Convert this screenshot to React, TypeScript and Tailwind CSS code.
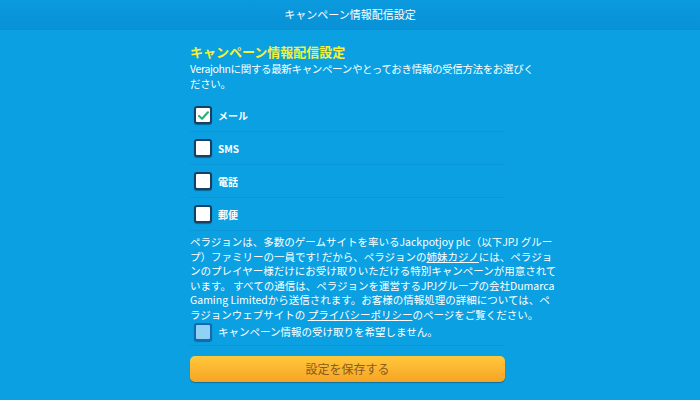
import { useState } from 'react'

const font = { fontFamily: '"Noto Sans CJK JP", "Noto Sans", sans-serif' }

type Option = { key: string; label: string }

const options: Option[] = [
  { key: 'mail', label: 'メール' },
  { key: 'sms', label: 'SMS' },
  { key: 'phone', label: '電話' },
  { key: 'post', label: '郵便' },
]

const CheckBox = ({ checked }: { checked: boolean }) => (
  <div className="flex h-[18px] w-[18px] shrink-0 items-center justify-center rounded-[3px] border-2 border-[#1b3f63] bg-white shadow-[0_1px_1px_rgba(0,0,0,0.35)]">
    {checked && (
      <svg viewBox="0 0 16 16" className="h-[13px] w-[13px]">
        <path d="M2.5 8.5 L6.2 12 L13.5 4" fill="none" stroke="#27b07a" strokeWidth="2.6" strokeLinecap="round" strokeLinejoin="round" />
      </svg>
    )}
  </div>
)

const App = () => {
  const [checked, setChecked] = useState<Record<string, boolean>>({ mail: true })

  return (
    <div className="flex h-[400px] w-[700px] flex-col overflow-hidden bg-[#0aa0e2] text-white" style={font}>
      <div className="flex h-[30px] shrink-0 items-center justify-center border-b border-[#0a8fd0] bg-gradient-to-b from-[#0b9ade] to-[#0891d6] text-[11px]">
        キャンペーン情報配信設定
      </div>

      <div className="ml-[190px] flex w-[315px] shrink-0 flex-col pt-[14px]">
        <div className="text-[13px] font-bold leading-[16px] text-[#f6f03a]">キャンペーン情報配信設定</div>
        <div className="mt-[1px] whitespace-nowrap text-[10.5px] leading-[15px] tracking-[-0.35px]">
          Verajohnに関する最新キャンペーンやとっておき情報の受信方法をお選びく
          <br />
          ださい。
        </div>

        <div className="mt-[8px] flex flex-col">
          {options.map((o) => (
            <div
              key={o.key}
              className="flex h-[33px] items-center gap-[6px] border-b border-[#0b96d8] pl-[4px] text-[10px] font-bold"
              onClick={() => setChecked({ ...checked, [o.key]: !checked[o.key] })}
            >
              <CheckBox checked={!!checked[o.key]} />
              <span>{o.label}</span>
            </div>
          ))}
        </div>

        <div className="mt-[4px] whitespace-nowrap text-[10.5px] leading-[14.6px]">
          ペラジョンは、多数のゲームサイトを率いるJackpotjoy plc（以下JPJ グルー
          <br />
          プ）ファミリーの一員です! だから、ペラジョンの<span className="underline">姉妹カジノ</span>には、ペラジョ
          <br />
          ンのプレイヤー様だけにお受け取りいただける特別キャンペーンが用意されて
          <br />
          います。 すべての通信は、ペラジョンを運営するJPJグループの会社Dumarca
          <br />
          Gaming Limitedから送信されます。お客様の情報処理の詳細については、ペ
          <br />
          ラジョンウェブサイトの <span className="underline">プライバシーポリシー</span>のページをご覧ください。
        </div>

        <div className="flex items-center gap-[6px] border-b border-[#0b96d8] pb-[4px] pl-[4px] text-[10.5px]">
          <div className="h-[18px] w-[18px] shrink-0 rounded-[3px] border-2 border-[#1768ae] bg-[#8fd2f6] shadow-[0_1px_1px_rgba(0,0,0,0.3)]" />
          <span>キャンペーン情報の受け取りを希望しません。</span>
        </div>

        <button className="mt-[10px] h-[26px] w-full rounded-[5px] bg-gradient-to-b from-[#ffc93c] to-[#f7a324] text-[12px] text-[#8a5a1e] shadow-[0_1px_1px_rgba(0,0,0,0.3)]">
          設定を保存する
        </button>
      </div>
    </div>
  )
}

export default App
